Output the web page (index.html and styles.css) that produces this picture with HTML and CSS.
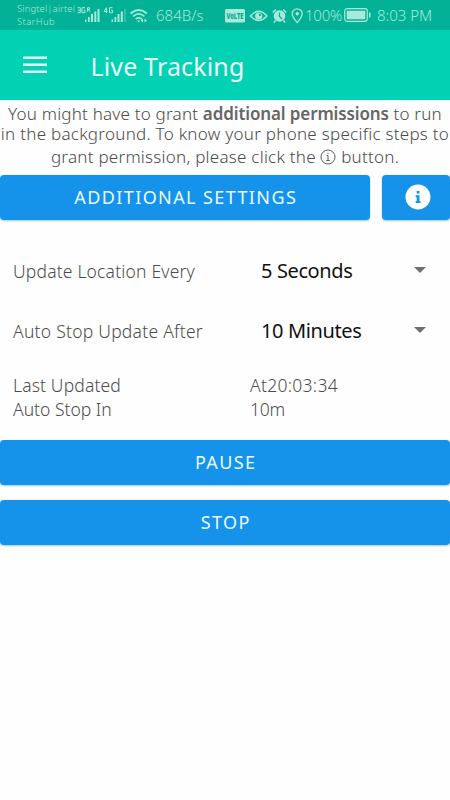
FILE: index.html
```
<!DOCTYPE html>
<html lang="en">
<head>
<meta charset="utf-8">
<title>Live Tracking</title>
<link rel="stylesheet" href="styles.css">
</head>
<body>
<header class="status">
  <div class="carriers"><span class="c1">Singtel|airtel</span><span class="c2">StarHub</span></div>
  <svg class="signals" width="75" height="20" viewBox="0 0 75 20" fill="currentColor">
    <g transform="translate(0 1.200)" fill="none" stroke="currentColor" stroke-width="1"><path d="M.5 1.500h2.800v5H.5M1 4h2.300M8 1.500H5v5h3V4H6.700M10.500 5.500v-4h2v1.800h-2M11.500 3.500l1.300 2"/><path d="M29.500 6.800V1.500L27 5.300h3.600M35.500 1.500h-3v5h3V4h-1.500"/></g>
    <path d="M8 14.500h1.500V17H8zM11 12h1.700v5H11zM14 9h2v8h-2zM17.300 6.500h2V17h-2zM20.500 4h2v13h-2zM34.500 14.500H36V17h-1.500zM37.500 12h1.700v5h-1.700zM40.500 9h2v8h-2zM43.800 6.500h2V17h-2z"/>
    <path opacity=".3" d="M47 4h2v13h-2z"/>
    <g fill="none" stroke="currentColor" stroke-width="1.700"><path d="M53.500 8.500q8.200-7 16.400 0M56 11.300q5.700-4.800 11.400 0M58.700 14q3-2.400 6 0"/></g>
    <path d="M60 15.500h3l-1.500 2zM66 13.500v4l-2.500-2zM67.500 13.500v4l2.500-2z"/>
  </svg>
  <span class="s speed">684B/s</span>
  <svg class="glyphs" width="80" height="20" viewBox="0 0 80 20">
    <rect x="0" y="4" width="20" height="13.500" rx="1.500" fill="currentColor"/>
    <text x="1.500" y="14" textLength="17" lengthAdjust="spacingAndGlyphs" class="volte">VoLTE</text>
    <path d="M25.500 11q8.200-9.500 16.400 0q-8.200 9-16.400 0z" fill="none" stroke="currentColor" stroke-width="1.500"/>
    <circle cx="33.700" cy="11" r="3.600" fill="currentColor"/><circle cx="35" cy="9.700" r="1.200" class="hole"/>
    <circle cx="54.500" cy="11" r="5.800" fill="currentColor"/>
    <path d="M47.800 7.500l3-3M61.200 7.500l-3-3M50.500 15.500l-1.500 2M58.500 15.500l1.500 2" stroke="currentColor" stroke-width="1.600"/>
    <path d="M54.500 7.500v4l2.500 2.500" class="hand"/>
    <path d="M72.200 17.500q-5-5.500-5-8.700a5 5 0 0 1 10 0q0 3.200-5 8.700z" fill="none" stroke="currentColor" stroke-width="1.300"/>
    <circle cx="72.200" cy="8.800" r="1.700" fill="currentColor"/>
  </svg>
  <span class="s percent">100%</span>
  <svg class="battery" width="27" height="14" viewBox="0 0 27 14"><rect x=".7" y=".7" width="22.600" height="12.600" rx="2.500" fill="none" stroke="currentColor" stroke-width="1.200"/><rect x="2.700" y="2.700" width="18.600" height="8.600" rx="1" fill="currentColor"/><path d="M25 4.500h1.500v5H25z" fill="currentColor"/></svg>
  <span class="s clock">8:03 PM</span>
</header>
<nav class="appbar">
  <svg width="24" height="18" viewBox="0 0 24 18" fill="#e9fffa"><path d="M0 .5h24V3H0zM0 7.500h24V10H0zM0 14.500h24V17H0z"/></svg>
  <h1>Live Tracking</h1>
</nav>
<main>
  <div class="note">
    <div class="line l1">You might have to grant <b>additional permissions</b> to run</div>
    <div class="line l2">in the background. To know your phone specific steps to</div>
    <div class="line last">grant permission, please click the <svg width="16" height="16" viewBox="0 0 16 16"><circle cx="8" cy="8" r="7" fill="none" stroke="currentColor" stroke-width=".9"/><path d="M6.500 6.500H8v5M6.300 11.500h3.400M7.500 4.300h1" fill="none" stroke="currentColor" stroke-width=".9"/></svg> button.</div>
  </div>
  <div class="actions">
    <button class="btn wide">ADDITIONAL SETTINGS</button>
    <button class="btn info" aria-label="Info"><svg width="26" height="26" viewBox="0 0 26 26"><circle cx="13" cy="13" r="12.500" fill="#fff"/><path d="M11.700 7h2.800v2.500h-2.800zM10.700 11.200h3.800v5.900h.9v2h-4.700v-2h1v-3.900h-1z" fill="#1593ea"/></svg></button>
  </div>
  <div class="row"><span class="label f1">Update Location Every</span><span class="value">5 Seconds</span><i class="caret"></i></div>
  <div class="row"><span class="label f2">Auto Stop Update After</span><span class="value">10 Minutes</span><i class="caret"></i></div>
  <dl class="info-list">
    <dt class="f3">Last Updated</dt><dd class="f5">At20:03:34</dd>
    <dt>Auto Stop In</dt><dd class="f6">10m</dd>
  </dl>
  <button class="btn full">PAUSE</button>
  <button class="btn full stop">STOP</button>
</main>
</body>
</html>
```
FILE: styles.css
```
* { box-sizing: border-box; }
body { margin: 0; width: 450px; height: 800px; overflow: hidden; background: #fefefe; font-family: "Noto Sans", sans-serif; font-weight: 300; color: #4c4c4c; white-space: nowrap; }
.status { display: flex; align-items: center; height: 30px; background: #03b196; color: #a5eadb; padding-left: 17px; }
.carriers { display: flex; flex-direction: column; width: 60px; font-size: 9.5px; line-height: 13.5px; }
.c1 { letter-spacing: .12px; }
.c2 { letter-spacing: .36px; }
.s { line-height: 30px; font-size: 15px; }
.speed { width: 49px; margin-left: 4px; }
.glyphs { margin-left: 20px; }
.volte { font: 800 8px "Noto Sans", sans-serif; fill: #03a58c; }
.hole { fill: #03b196; }
.hand { fill: none; stroke: #03b196; stroke-width: 1.2; }
.percent { width: 38px; letter-spacing: -.2px; }
.battery { margin-left: 1px; }
.clock { margin-left: 6px; }
.appbar { display: flex; align-items: center; height: 70px; padding-left: 23px; background: #02d1b3; }
.appbar h1 { margin: 2px 0 0 43.5px; font-size: 25px; font-weight: 400; color: #e9fffa; line-height: 34px; letter-spacing: .15px; }
.note { text-align: center; font-size: 17px; padding-top: 3px; color: #4a4a4a; }
.note b { font-weight: 600; color: #666; letter-spacing: -.12px; }
.line { height: 20px; line-height: 21px; }
.l1 { letter-spacing: .21px; }
.l2 { letter-spacing: .27px; }
.last { height: 24px; line-height: 27px; letter-spacing: .25px; }
.line svg { vertical-align: -2px; }
.actions { display: flex; gap: 12px; padding-top: 8px; }
.btn { display: flex; align-items: center; justify-content: center; height: 44.5px; border: 0; border-radius: 4px; background: #1593ea; color: #e9fbff; font: 400 18px "Noto Sans", sans-serif; letter-spacing: 1.4px; box-shadow: 0 1px 2px #9ccbe8; padding: 0 0 1px 1.5px; }
.wide { width: 370px; }
.info { width: 68px; padding-left: 3px; }
.row { display: flex; align-items: center; height: 60px; font-size: 17.5px; padding-left: 13px; }
.actions + .row { margin-top: 21.5px; }
.label { width: 248px; }
.f1 { letter-spacing: .18px; }
.f2 { letter-spacing: .25px; }
.f3 { letter-spacing: .15px; }
.f5 { letter-spacing: .29px; }
.f6 { letter-spacing: -.2px; }
.value { width: 153px; font-size: 20px; font-weight: 400; color: #111; letter-spacing: -.38px; padding-bottom: 2px; }
.caret { border: 6.5px solid transparent; border-top-color: #707070; border-bottom: 0; margin-bottom: 2px; }
.info-list { display: grid; grid-template-columns: 237px 1fr; margin: 12px 0 0; padding-left: 13px; font-size: 17.5px; line-height: 24px; }
.info-list dd { margin: 0; }
.full { width: 100%; margin-top: 19px; }
.stop { margin-top: 15.5px; }
```
